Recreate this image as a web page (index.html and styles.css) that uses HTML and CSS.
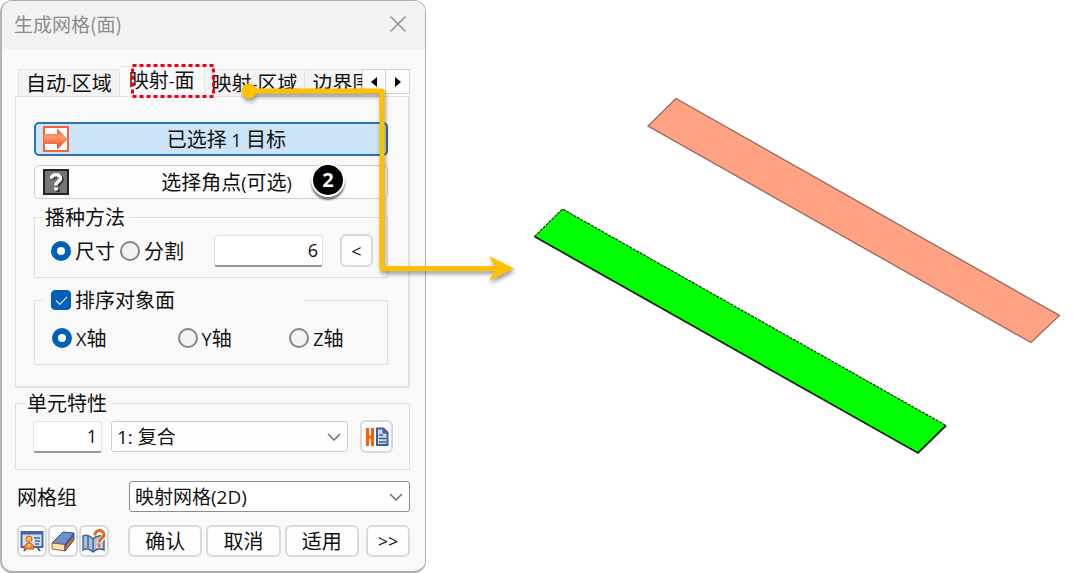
FILE: index.html
```html
<!DOCTYPE html>
<html lang="zh-CN">
<head>
<meta charset="utf-8">
<title>生成网格(面)</title>
<link rel="stylesheet" href="styles.css">
</head>
<body>
<main class="stage">
  <section class="dialog" aria-label="生成网格(面)">
    <header class="titlebar">
      <h1 class="title">生成网格(面)</h1>
      <button class="close" type="button" aria-label="关闭">
        <svg width="18" height="18" viewBox="0 0 18 18"><path d="M1.500 1.500 16.500 16.500M16.500 1.500 1.500 16.500" fill="none" stroke="#949494" stroke-width="1.600"/></svg>
      </button>
    </header>

    <div class="content">
      <div class="tabbar">
        <div class="tabs" role="tablist">
          <button class="tab" type="button" role="tab">自动<span class="latin">-</span>区域</button>
          <button class="tab active" type="button" role="tab" aria-selected="true">映射<span class="latin">-</span>面</button>
          <button class="tab" type="button" role="tab">映射<span class="latin">-</span>区域</button>
          <button class="tab" type="button" role="tab">边界围</button>
        </div>
        <div class="scrollers">
          <button class="scroller" type="button" aria-label="向左"><svg width="6" height="10" viewBox="0 0 6 10"><path d="M6 0v10L0 5z"/></svg></button>
          <button class="scroller" type="button" aria-label="向右"><svg width="6" height="10" viewBox="0 0 6 10"><path d="M0 0v10l6-5z"/></svg></button>
        </div>
      </div>

      <div class="panel">
        <button class="pick selected" type="button">
          <svg class="pick-icon" width="26" height="26" viewBox="0 0 26 26">
            <defs><linearGradient id="arrow" x1="0" y1="0" x2="0" y2="1"><stop offset="0" stop-color="#ff4a10"/><stop offset=".4" stop-color="#ff9c74"/><stop offset="1" stop-color="#f03c08"/></linearGradient></defs>
            <rect x="1" y="1" width="24" height="24" fill="#fff" stroke="#f8623a" stroke-width="2"/>
            <path d="M1 8h13V2.500L25 13 14 23.500V18H1z" fill="url(#arrow)"/>
          </svg>
          <span>已选择 <span class="latin">1</span> 目标</span>
        </button>
        <button class="pick" type="button">
          <svg class="pick-icon" width="26" height="26" viewBox="0 0 26 26">
            <rect x="1" y="1" width="24" height="24" fill="#777" stroke="#222" stroke-width="2"/>
            <path d="M9 9.500c0-5 9-5 9 0 0 3-4 3-4 7M14 19v3" transform="translate(1 1)" fill="none" stroke="#333" stroke-width="3.500"/>
            <path d="M8.500 9.500c0-5 9-5 9 0 0 3-4.500 3-4.500 7M13 18.500v3" fill="none" stroke="#fff" stroke-width="3.500"/>
          </svg>
          <span>选择角点<span class="latin">(</span>可选<span class="latin">)</span></span>
        </button>

        <fieldset class="group">
          <legend>播种方法</legend>
          <div class="seed">
            <label class="choice"><input type="radio" name="seed" checked>尺寸</label>
            <label class="choice"><input type="radio" name="seed">分割</label>
            <input class="number size" type="text" value="6" aria-label="尺寸">
            <button class="btn small" type="button"><span class="latin">&lt;</span></button>
          </div>
        </fieldset>

        <fieldset class="group sort">
          <legend><label class="choice"><input type="checkbox" checked>排序对象面</label></legend>
          <div class="axes">
            <label class="choice"><input type="radio" name="axis" checked><span><span class="latin">X</span>轴</span></label>
            <label class="choice"><input type="radio" name="axis"><span><span class="latin">Y</span>轴</span></label>
            <label class="choice"><input type="radio" name="axis"><span><span class="latin">Z</span>轴</span></label>
          </div>
        </fieldset>
      </div>

      <fieldset class="group property">
        <legend>单元特性</legend>
        <div class="property-row">
          <input class="number id" type="text" value="1" aria-label="特性编号">
          <select class="combo" aria-label="单元特性"><option>1: 复合</option></select>
          <button class="btn small" type="button" aria-label="特性">
            <svg width="24" height="20" viewBox="0 0 24 20">
              <path d="M2.500 1v18M7.500 1v18M2.500 10h5" fill="none" stroke="#f4620c" stroke-width="3.200"/>
              <path d="M12 1.500h6.500l4 4V18H12z" fill="#c9d9ef" stroke="#3f5f96" stroke-width="2"/>
              <path d="M17.500 1.500v5h5z" fill="#3f5f96"/>
              <path d="M14 8h4M14 11.500h7M14 15h7" stroke="#3f5f96" stroke-width="1.500"/>
            </svg>
          </button>
        </div>
      </fieldset>

      <div class="mesh-row">
        <label for="mesh">网格组</label>
        <select class="combo dark" id="mesh"><option>映射网格(2D)</option></select>
      </div>

      <footer class="actions">
        <div class="tools">
          <button class="btn tool" type="button" aria-label="显示">
            <svg width="24" height="24" viewBox="0 0 24 24">
              <path d="M7 18l-3 4M17 18l3 4" stroke="#3f5f8f" stroke-width="2"/>
              <rect x="1.500" y="3" width="21" height="15" fill="#cfe0f2" stroke="#42669d" stroke-width="2"/>
              <path d="M1 2.500h22v3H1z" fill="#42669d"/>
              <path d="M14 9h6M15 12h5M15 15h4" stroke="#42669d" stroke-width="1.500"/>
              <circle cx="9" cy="10" r="3" fill="#ffc93c" stroke="#e05a10"/>
              <path d="M4 20c0-8 10-8 10 0z" fill="#f58a2c" stroke="#d84e0c"/>
              <path d="M8 15l1 4 1-4z" fill="#fff"/>
            </svg>
          </button>
          <button class="btn tool" type="button" aria-label="清除">
            <svg width="24" height="24" viewBox="0 0 24 24">
              <path d="M1 14 12 3l11 1L14 15.500z" fill="#6c92cb" stroke="#2e4e84"/>
              <path d="M1 14l13 1.500V22L1 20z" fill="#ffe0b8" stroke="#a45b27"/>
              <path d="M14 15.500 23 4v7l-9 11z" fill="#e9641b" stroke="#2e4e84"/>
              <path d="M14 15.500 23 4v3l-9 11z" fill="#3d609b"/>
            </svg>
          </button>
          <button class="btn tool" type="button" aria-label="帮助">
            <svg width="24" height="24" viewBox="0 0 24 24">
              <path d="M1 7c4-2 7 0 10 3 3-3 7-4 11-2v13c-4-2-8-1-11 2-3-3-6-4-10-2z" fill="#a9c0dd" stroke="#47658f" stroke-width="1.500"/>
              <path d="M11 10v13M6 7v12" stroke="#47658f" stroke-width="1.500"/>
              <path d="M13 7c0-7 9-7 9-1 0 4-5 4-5 8M17 16v3" fill="none" stroke="#fff" stroke-width="5"/>
              <path d="M13 6.500c0-7 9-6 9-1 0 4-5 4-5 8M17 15.500v3" fill="none" stroke="#e9651d" stroke-width="3"/>
            </svg>
          </button>
        </div>
        <button class="btn main" type="button">确认</button>
        <button class="btn main" type="button">取消</button>
        <button class="btn main" type="button">适用</button>
        <button class="btn more" type="button"><span class="latin">&gt;&gt;</span></button>
      </footer>
    </div>
  </section>

  <section class="view">
    <svg class="model" viewBox="426 0 647 573" role="img" aria-label="模型视图">
      <path d="M676 98.500 1059.500 315.500 1031 342.500 648 126z" fill="#ffa284" stroke="#98685a" stroke-width="1.300"/>
      <path d="M562.500 209 946 425.500 918 453 534.500 236.500z" fill="#0f0"/>
      <path d="M534.500 236.500 562.500 209 946 425.500" fill="none" stroke="#123c12" stroke-width="1.200" stroke-dasharray="3 1"/>
      <path d="M946 425.500 918 453 534.500 236.500" fill="none" stroke="#062006" stroke-width="1.800"/>
    </svg>
  </section>

  <svg class="callout" width="530" height="300" viewBox="0 0 530 300" aria-hidden="true">
    <rect x="132.500" y="65.500" width="81" height="31" fill="none" stroke="#f00010" stroke-width="3" stroke-dasharray="4 3"/>
    <g class="connector">
      <path d="M249 91H382V268.500H496" fill="none" stroke="#ffc000" stroke-width="5" stroke-linejoin="round"/>
      <circle cx="249" cy="91" r="7.500" fill="#ffc000"/>
      <path d="M489 256 514 268.500 489 281 496 268.500z" fill="#ffc000"/>
    </g>
  </svg>
  <span class="badge">2</span>
</main>
</body>
</html>
```
FILE: styles.css
```css
* { box-sizing: border-box; }

body {
  margin: 0;
  background: #fff;
  color: #111;
  font: 20px/24px "Noto Sans CJK SC", sans-serif;
}

button, input, select { font: inherit; color: inherit; margin: 0; }
button { padding: 0; }
svg { display: block; }

.latin { font-family: "Open Sans", sans-serif; font-size: 18px; line-height: 18px; }

.stage {
  position: relative;
  display: flex;
  min-height: 100vh;
}

/* Dialog */
.dialog {
  flex: 0 1 426px;
  background: #f9f9f9;
  border: 1px solid #b0b0b0;
  border-left: 2px solid #b4b4b4;
  border-bottom: 2px solid #adadad;
  border-radius: 12px;
  overflow: hidden;
}

.titlebar {
  display: flex;
  align-items: center;
  justify-content: space-between;
  height: 48px;
  padding: 0 18px 2px 12px;
  background: #f2f2f2;
}

.title { margin: 0; font-size: 19px; font-weight: 400; color: #8c8c8c; }
.close { border: 0; background: none; }

.content { padding: 17px 15px 0 13px; }

/* Tabs */
.tabbar { display: flex; padding-left: 3px; }

.tabs {
  display: flex;
  flex: 1;
  align-items: flex-end;
  min-width: 0;
  overflow: hidden;
}

.tab {
  flex: none;
  height: 27px;
  padding: 0 7px;
  border: 1px solid #e5e5e5;
  border-bottom: 0;
  border-left-width: 0;
  background: #f3f3f3;
  white-space: nowrap;
}

.tab:first-child { border-left-width: 1px; }
.tab.active { height: 30px; padding: 0 9px 4px; background: #f9f9f9; }

.scrollers { display: flex; height: 25px; margin-top: 3px; }

.scroller {
  display: grid;
  place-items: center;
  width: 24px;
  border: 1px solid #d2d2d2;
  background: #fdfdfd;
}

.scroller + .scroller { border-left: 0; }

/* Tab panel */
.panel {
  display: flex;
  flex-direction: column;
  padding: 25px 20px 21px 18px;
  border: 1px solid #e3e3e3;
  border-right-width: 2px;
  border-bottom-width: 2px;
}

.pick {
  position: relative;
  height: 34px;
  margin-bottom: 9px;
  padding-left: 31px;
  border: 1px solid #d0d0d0;
  border-radius: 5px;
  background: #fdfdfd;
}

.pick.selected { border: 2px solid #2a72b0; background: #cce4f7; }
.pick + .pick { margin-bottom: 6px; }

.pick-icon { position: absolute; left: 8px; top: 3px; }
.pick.selected .pick-icon { left: 7px; top: 2px; }

/* Groups */
.group {
  min-width: 0;
  margin: 0;
  padding: 0 16px;
  border: 1px solid #dfdfdf;
}

.group legend { margin-left: -8px; padding: 0 4px 0 2px; }

.panel .group { padding-right: 14px; }

.seed { display: flex; align-items: center; padding: 5px 0 10px; }
.seed .choice + .choice { margin-left: 5px; }

.choice { display: flex; align-items: center; gap: 4px; white-space: nowrap; }

.choice input {
  appearance: none;
  flex: none;
  width: 20px;
  height: 20px;
  border: 2px solid #858585;
  border-radius: 50%;
  background: #f3f3f3;
}

.choice input:checked { border: 6px solid #005fb8; background: #fff; }

.choice input[type="checkbox"] {
  border: 1px solid #005fb8;
  border-radius: 4px;
  background: #005fb8;
  display: grid;
  place-items: center;
}

.choice input[type="checkbox"]::after {
  content: "";
  width: 10px;
  height: 5px;
  margin-bottom: 3px;
  border: solid #fff;
  border-width: 0 0 1px 1px;
  transform: rotate(-45deg);
}

.number {
  height: 32px;
  padding: 0 4px;
  border: 1px solid #e4e4e4;
  border-bottom: 2px solid #989898;
  border-radius: 3px;
  background: #fff;
  font-family: "Open Sans", sans-serif;
  font-size: 18px;
  text-align: right;
}

.size { flex: 1; min-width: 0; margin: 0 17px 0 30px; }

.btn {
  display: grid;
  place-items: center;
  height: 32px;
  border: 2px solid #d9d9d9;
  border-radius: 6px;
  background: #fefefe;
}

.small { flex: none; width: 33px; height: 33px; }

.sort { margin-top: 10px; }
.panel .sort legend { width: 260px; padding-left: 8px; }
.axes { display: grid; grid-template-columns: 126fr 112fr 84fr; padding: 14px 0 14px 1px; }

/* Element property */
.property { margin-top: 3px; padding-left: 17px; }
.property-row { display: flex; align-items: center; padding: 5px 0 16px; }
.id { flex: none; width: 69px; }

.combo {
  flex: 1;
  min-width: 0;
  height: 31px;
  padding: 0 32px 0 5px;
  appearance: none;
  border: 1px solid #cfcfcf;
  border-radius: 3px;
  background: #fdfdfd url("data:image/svg+xml,%3Csvg xmlns='http://www.w3.org/2000/svg' width='14' height='8'%3E%3Cpath d='M1 1l6 6 6-6' fill='none' stroke='%23707070' stroke-width='1.500'/%3E%3C/svg%3E") no-repeat right 6px center;
  font-family: "Open Sans", "Noto Sans CJK SC", sans-serif;
  font-size: 19px;
}

.combo.dark { border-color: #8c8c8c; background-color: #fff; }
.property .combo { margin: 0 12px 0 9px; }

/* Mesh set */
.mesh-row { display: flex; align-items: center; margin-top: 11px; }
.mesh-row label { flex: none; width: 114px; padding-left: 2px; }

/* Footer buttons */
.actions { display: flex; gap: 4px; margin-top: 13px; padding-left: 2px; }
.tools { display: flex; gap: 1px; margin-right: 15px; }
.tool { width: 30px; }
.main { flex: 1; }
.more { width: 44px; margin-left: 3px; }

/* Model view */
.view { flex: 1; min-width: 0; }
.model { width: 100%; height: auto; }

/* Callouts lying over the dialog and the view */
.callout { position: absolute; left: 0; top: 0; pointer-events: none; }
.connector { filter: drop-shadow(1px 3px 2px rgba(0, 0, 0, .4)); }

.badge {
  position: absolute;
  left: 311px;
  top: 163px;
  width: 34px;
  height: 34px;
  border: 2px solid #fff;
  border-radius: 50%;
  background: #000;
  box-shadow: 0 3px 2px rgba(0, 0, 0, .5);
  color: #fff;
  font: bold 20px/30px "Open Sans", sans-serif;
  text-align: center;
}
```
